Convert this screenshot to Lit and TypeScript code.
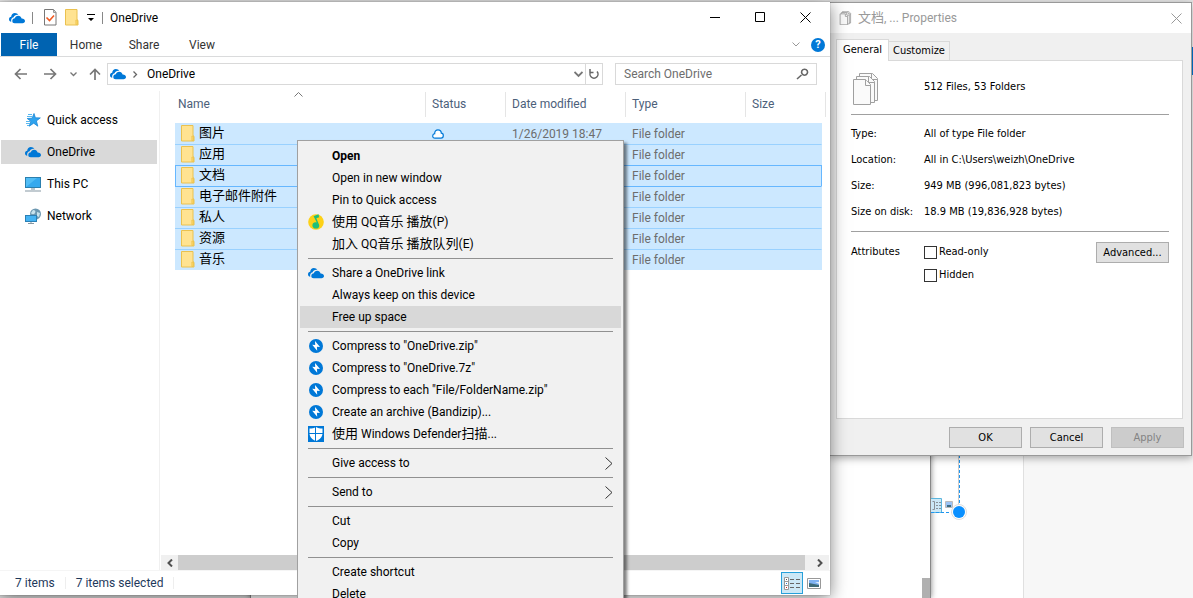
import { LitElement, html, css, svg, nothing, TemplateResult } from "lit";
import { customElement } from "lit/decorators.js";
import { classMap } from "lit/directives/class-map.js";

const base = css`
  * { box-sizing: border-box; }
  button { font: inherit; color: inherit; background: none; border: 0; padding: 0; margin: 0; }
  svg { display: block; flex: none; }
  .cjk { font-size: 13px; line-height: 14px; }
`;

/* Chinese runs are set one pixel larger than the Latin text beside them. */
const mixed = (text: string) =>
  text.split(/([\u4e00-\u9fff]+)/).filter(Boolean)
    .map((part) => /[\u4e00-\u9fff]/.test(part) ? html`<span class="cjk">${part}</span>` : part);

const cloud = html`<svg width="16" height="12" viewBox="0 0 16 12" fill="#0078d7" aria-hidden="true">
  <path d="M2.300 9.700C.8 9.500 0 8.500 0 7.200 0 5.900 .9 4.900 2.200 4.700 2.300 2.400 3.900 1 5.900 1c1.500 0 2.700.7 3.400 1.900C7.100 2.400 5.200 3.500 4.600 5.200 2.800 5.500 1.700 7.400 2.300 9.700z"/>
  <path d="M5.700 11.200C4.100 11.200 3.300 10.200 3.300 8.900 3.300 7.400 4.400 6.300 5.900 6.300 6.200 4.800 7.500 3.700 9.200 3.700c1.700 0 3 1.100 3.400 2.800C14.400 6.400 16 7.300 16 9c0 1.400-1.100 2.200-2.400 2.200z"/>
</svg>`;

const folder = html`<svg width="14" height="17" viewBox="0 0 14 17" aria-hidden="true">
  <path d="M.5.5h11.500v10l1 .8v4.700H.5z" fill="#ffe391" stroke="#eac14f"/>
  <path d="M10.900 15.500v-4.500h1.600v4.500z" fill="#ffd967" stroke="#eac14f" stroke-width=".8"/>
</svg>`;

const star = html`<svg width="16" height="16" viewBox="0 0 16 16" aria-hidden="true">
  <path d="M9 1.500l1.400 4.300 4.900.1-3.900 3 1.400 5.300-4.100-3-4.400 3 1.500-5-3.600-2.700 4.900-.3z" fill="#2ea3ee" stroke="#1b86d6" stroke-width=".8"/>
  <path d="M3 2.500h4M2 4.500h5M1 9.500h4M1 11.500h4M2 13.500h2" stroke="#58b7ef" stroke-width="1"/>
</svg>`;

const pc = html`<svg width="16" height="16" viewBox="0 0 16 16" aria-hidden="true">
  <rect x=".5" y="1.500" width="15" height="10" fill="#52bdf5" stroke="#2b7fae"/>
  <path d="M1 11L12 2h3v9z" fill="#36a9ee"/>
  <path d="M6 12h4v2H6z" fill="#b9c6ce"/><path d="M0 15h16" stroke="#8597a3"/>
</svg>`;

const network = html`<svg width="16" height="16" viewBox="0 0 16 16" aria-hidden="true">
  <circle cx="10.500" cy="6" r="5.500" fill="#6d98b1"/>
  <path d="M8 2c2 0 3 1 2 3S6 6 6 5zM12 4l3 1-1 4-2-1z" fill="#c8e3ee"/>
  <rect x=".5" y="7.500" width="11" height="6" fill="#45b3f3" stroke="#2b80b5"/>
  <path d="M3 15.500h6M6 14v1" stroke="#8597a3"/>
</svg>`;

const bandizip = html`<svg width="16" height="16" viewBox="0 0 16 16" aria-hidden="true">
  <circle cx="8" cy="8" r="7" fill="#0078d7"/>
  <path d="M7 3l.2 4-3-.2 5 6-.3-4 3.100.3z" fill="#fff"/>
</svg>`;

const defender = html`<svg width="16" height="16" viewBox="0 0 16 16" aria-hidden="true">
  <path d="M0 0h16v16H0z" fill="#0078d7"/>
  <path d="M8 1c2 1.200 3.800 1.500 6.500 1.500V7c0 4.200-2.800 6.600-6.500 8C4.300 13.600 1.500 11.200 1.500 7V2.500C4.200 2.500 6 2.200 8 1z" fill="#fff"/>
  <path d="M7.500 1v14M1 7.500h14" stroke="#0078d7" stroke-width="1"/>
</svg>`;

const qq = html`<svg width="16" height="16" viewBox="0 0 16 16" aria-hidden="true">
  <circle cx="8" cy="8" r="7.800" fill="#fdd116"/>
  <path d="M10.500.2L5.600 2.300l3.200 6.200c-2.300-.6-4.400.6-4.400 2.900 0 2 1.600 3.200 3.500 3.200 2.300 0 3.700-1.600 3.300-3.700L8.300 4.200l2.900-.9z" fill="#1fbf7a"/>
</svg>`;

const viewDetails = html`<svg width="16" height="13" viewBox="0 0 16 13" aria-hidden="true">
  <path d="M.5.500h4v12h-4zM.5 4.500h4M.5 8.500h4" fill="#fff" stroke="#999"/>
  <path d="M2 2h1v1H2z" fill="#555"/><path d="M2 6h1v1H2z" fill="#2a7bd0"/><path d="M2 10h1v1H2z" fill="#c22"/>
  <path d="M6 2.500h4M12 2.500h4M6 6.500h4M12 6.500h4M6 10.500h4M12 10.500h4" stroke="#666"/>
</svg>`;

const viewThumbs = html`<svg width="14" height="11" viewBox="0 0 14 11" aria-hidden="true">
  <path d="M.5.500h13v10H.5z" fill="#fff" stroke="#999"/>
  <path d="M2 2h10v7H2z" fill="#7fb2f2"/><path d="M2 5l5 1 5 1v2H2z" fill="#3e6b78"/><path d="M8 4h4v2z" fill="#dcebfb"/>
</svg>`;

const stroked = (w: number, h: number, d: string, color: string, width: number) => html`
  <svg width=${w} height=${h} viewBox="0 0 ${w} ${h}" fill="none" stroke=${color} stroke-width=${width} aria-hidden="true">
    ${svg`<path d=${d}></path>`}
  </svg>`;

const statusCloud = html`<svg width="12" height="10" viewBox="0 0 12 10" fill="#fff" stroke="#0078d7" stroke-width="1.200" aria-hidden="true">
  <path d="M3 9.200C1.500 9.200.7 8.200.7 7 .7 5.700 1.600 4.900 2.700 4.700 2.500 2.500 4 .8 6 .8 8 .8 9.400 2.300 9.300 4.200 10.500 4.300 11.300 5.300 11.300 6.600 11.300 8.200 10.300 9.200 9 9.200z"/>
</svg>`;

const ROWS: { name: string; date?: string; status?: boolean; focus?: boolean }[] = [
  { name: "图片", date: "1/26/2019 18:47", status: true },
  { name: "应用" },
  { name: "文档", focus: true },
  { name: "电子邮件附件" },
  { name: "私人" },
  { name: "资源" },
  { name: "音乐" },
];

@customElement("explorer-window")
class ExplorerWindow extends LitElement {
  static styles = [base, css`
    :host {
      display: flex; flex-direction: column; background: #fff; color: #000;
      font: 12px/16px Roboto, "Noto Sans CJK SC", sans-serif;
      box-shadow: 0 0 1px rgba(0,0,0,.4), 0 3px 16px rgba(0,0,0,.5);
    }
    .title { display: flex; align-items: center; height: 31px; padding: 0 2px 0 9px; }
    .bar { width: 1px; height: 12px; background: #888; }
    .quick { display: flex; align-items: center; gap: 7px; flex: 1; }
    .tools { display: flex; align-items: center; gap: 8px; margin-left: 4px; }
    .caption { display: flex; }
    .caption button { width: 45px; height: 31px; display: grid; place-items: center; }
    .ribbon { display: flex; align-items: center; height: 24px; padding: 0 5px 0 1px; border-bottom: 1px solid #dadbdc; }
    .tab { width: 58px; height: 23px; padding-top: 1px; text-align: center; color: #333; }
    .file { width: 56px; background: #0063b1; color: #fff; }
    .space { flex: 1; }
    .ribbon-end { display: flex; align-items: center; gap: 11px; }
    .help { width: 14px; height: 14px; border-radius: 50%; background: #0078d7; color: #fff; font-weight: 700; line-height: 14px; font-size: 11px; }
    .nav { display: flex; align-items: center; padding: 6px 13px 6px 14px; }
    .nav-buttons { display: flex; align-items: center; gap: 12px; margin-right: 6px; }
    .back { padding-right: 4px; }
    .address { display: flex; align-items: center; flex: 1; height: 22px; border: 1px solid #d9d9d9; padding-left: 2px; gap: 7px; }
    .address .space { padding-left: 2px; }
    .address-end { display: flex; align-items: center; gap: 2px; }
    .address .reload { width: 17px; height: 20px; border-left: 1px solid #d9d9d9; display: grid; place-items: center; }
    .search { display: flex; align-items: center; width: 202px; height: 22px; border: 1px solid #d9d9d9; margin-left: 12px; padding: 0 7px 0 8px; }
    .search input { flex: 1; min-width: 0; border: 0; outline: 0; padding: 0; font: inherit; background: none; }
    .search input::placeholder { color: #6d6d6d; opacity: 1; }
    .main { display: flex; flex: 1; min-height: 0; }
    .side { display: flex; flex-direction: column; gap: 8px; width: 160px; padding: 17px 2px 0 1px; border-right: 1px solid #f0f0f0; }
    .side a { display: flex; align-items: center; gap: 6px; height: 24px; padding-left: 24px; color: #000; text-decoration: none; }
    .side a.current { background: #d9d9d9; }
    .content { flex: 1; min-width: 0; display: flex; flex-direction: column; }
    .list { flex: 1; min-height: 0; padding: 1px 0 0 15px; overflow: hidden; }
    table { border-collapse: separate; border-spacing: 0; table-layout: fixed; width: 647px; }
    .c-name { width: 251px; } .c-status { width: 80px; } .c-date, .c-type { width: 120px; }
    th { padding: 0 0 6px; font-weight: 400; text-align: left; color: #4c607a; position: relative; }
    th span { display: block; height: 25px; line-height: 25px; padding-left: 6px; border-right: 1px solid #e5e5e5; }
    th:first-child span { padding-left: 3px; }
    th:last-child span { margin-right: -4px; }
    .sort { position: absolute; top: 0; left: 119px; }
    td { height: 21px; padding: 0 0 0 6px; background: #cce8ff; color: #6d6d6d; border-top: 1px solid #99d1ff; }
    tbody tr:first-child td { border-top-color: #cce8ff; }
    .focus td, .focus + tr td { border-top-color: #66b7ff; }
    td:last-child { border-right: 1px solid #cce8ff; }
    .focus td:last-child { border-right-color: #66b7ff; }
    .focus td:first-child { box-shadow: inset 1px 0 #66b7ff; }
    .name { display: flex; align-items: center; gap: 4px; height: 20px; padding-bottom: 2px; color: #000; font-size: 13px; line-height: 18px; }
    .scroll { display: flex; height: 15px; margin: 0 1px; background: #f0f0f0; }
    .scroll button { width: 17px; display: grid; place-items: center; }
    .scroll button.next { width: 24px; padding-left: 6px; }
    .thumb { flex: 1; background: #cdcdcd; }
    .status { display: flex; align-items: center; height: 25px; padding: 0 5px 0 15px; color: #1e395b; border-top: 1px solid #f5f5f5; }
    .status .count { padding-right: 10px; margin-right: 10px; border-right: 1px solid #eee; line-height: 12px; }
    .views { display: flex; align-items: center; }
    .views button { width: 22px; height: 22px; display: grid; place-items: center; }
    .views .on { background: #cce8f6; border: 1px solid #26a0da; }
  `];

  render() {
    return html`
      <header class="title">
        <div class="quick">
          ${cloud}<i class="bar"></i>
          <div class="tools">
            <svg width="13" height="17" viewBox="0 0 13 17" aria-hidden="true">
              <path d="M.5.500h9l2.500 3v12.500H.5z" fill="#fff" stroke="#777"/><path d="M9.500.5v3h2.500" fill="none" stroke="#999"/>
              <path d="M2.500 8.500l3 3L10 6.500" fill="none" stroke="#f05a22" stroke-width="1.600"/>
            </svg>
            ${folder}
            <svg width="8" height="8" viewBox="0 0 8 8" aria-hidden="true"><path d="M0 0h8v1H0zM1 4h6L4 7z"/></svg>
          </div>
          <i class="bar"></i><span>OneDrive</span>
        </div>
        <div class="caption">
          <button aria-label="Minimize">${stroked(11, 11, "M0 5.500h10", "#000", 1)}</button>
          <button aria-label="Maximize">${stroked(11, 11, "M.5.500h9v9h-9z", "#000", 1)}</button>
          <button aria-label="Close">${stroked(11, 11, "M.5.500l10 10M10.500.500l-10 10", "#000", 1)}</button>
        </div>
      </header>
      <nav class="ribbon">
        <button class="tab file">File</button><button class="tab">Home</button>
        <button class="tab">Share</button><button class="tab">View</button>
        <span class="space"></span>
        <div class="ribbon-end">
          ${stroked(8, 5, "M.5.500L4 4 7.500.500", "#999", 1)}
          <button class="help" aria-label="Help">?</button>
        </div>
      </nav>
      <div class="nav">
        <div class="nav-buttons">
          <button class="back" aria-label="Back">${stroked(14, 12, "M13 6H2M6.500 1L1.500 6l5 5", "#777", 1.7)}</button>
          <button aria-label="Forward">${stroked(14, 12, "M0 6h11M6.500 1l5 5-5 5", "#777", 1.7)}</button>
          <button aria-label="Recent">${stroked(7, 5, "M.5.500l3 3 3-3", "#777", 1.3)}</button>
          <button aria-label="Up">${stroked(12, 12, "M6 12V2M1 6.500l5-5 5 5", "#777", 1.7)}</button>
        </div>
        <div class="address">
          ${cloud}${stroked(5, 7, "M.5.500l3 3-3 3", "#666", 1.3)}
          <span class="space">OneDrive</span>
          <div class="address-end">
            ${stroked(9, 7, "M.5 1l4 4 4-4", "#777", 1.8)}
            <button class="reload" aria-label="Refresh">${stroked(12, 12, "M3 3.500a4 4 0 1 0 6 0M2 1v3.500h3.500", "#666", 1.5)}</button>
          </div>
        </div>
        <label class="search">
          <input type="search" placeholder="Search OneDrive" aria-label="Search OneDrive" />
          ${stroked(13, 12, "M5.500 7L1 11M8.500 1.200a3 3 0 1 0 .1 0z", "#666", 1.6)}
        </label>
      </div>
      <div class="main">
        <nav class="side">
          <a href="#">${star}Quick access</a>
          <a href="#" class="current">${cloud}OneDrive</a>
          <a href="#">${pc}This PC</a>
          <a href="#">${network}Network</a>
        </nav>
        <section class="content">
          <div class="list">
            <table>
              <colgroup><col class="c-name"><col class="c-status"><col class="c-date"><col class="c-type"><col></colgroup>
              <thead><tr>
                <th><span>Name</span><i class="sort">${stroked(9, 5, "M.5 4.500l4-4 4 4", "#777", 1)}</i></th>
                <th><span>Status</span></th><th><span>Date modified</span></th><th><span>Type</span></th><th><span>Size</span></th>
              </tr></thead>
              <tbody>
                ${ROWS.map((r) => html`<tr class=${classMap({ focus: !!r.focus })}>
                  <td><div class="name">${folder}${r.name}</div></td>
                  <td>${r.status ? statusCloud : nothing}</td>
                  <td>${r.date ?? ""}</td><td>File folder</td><td></td>
                </tr>`)}
              </tbody>
            </table>
          </div>
          <div class="scroll">
            <button aria-label="Scroll left">${stroked(6, 8, "M5 .5L1.500 4 5 7.500", "#505050", 2)}</button>
            <div class="thumb"></div>
            <button class="next" aria-label="Scroll right">${stroked(6, 8, "M1 .5L4.500 4 1 7.500", "#505050", 2)}</button>
          </div>
        </section>
      </div>
      <footer class="status">
        <span class="count">7 items</span><span class="count">7 items selected</span>
        <span class="space"></span>
        <div class="views">
          <button class="on" aria-label="Details">${viewDetails}</button>
          <button aria-label="Thumbnails">${viewThumbs}</button>
        </div>
      </footer>`;
  }
}

interface Entry { text: string; icon?: TemplateResult; bold?: boolean; hot?: boolean; sub?: boolean; }

const MENU: Entry[][] = [
  [
    { text: "Open", bold: true }, { text: "Open in new window" }, { text: "Pin to Quick access" },
    { text: "使用 QQ音乐 播放(P)", icon: qq }, { text: "加入 QQ音乐 播放队列(E)" },
  ],
  [{ text: "Share a OneDrive link", icon: cloud }, { text: "Always keep on this device" }, { text: "Free up space", hot: true }],
  [
    { text: 'Compress to "OneDrive.zip"', icon: bandizip }, { text: 'Compress to "OneDrive.7z"', icon: bandizip },
    { text: 'Compress to each "File/FolderName.zip"', icon: bandizip }, { text: "Create an archive (Bandizip)...", icon: bandizip },
    { text: "使用 Windows Defender扫描...", icon: defender },
  ],
  [{ text: "Give access to", sub: true }],
  [{ text: "Send to", sub: true }],
  [{ text: "Cut" }, { text: "Copy" }],
  [{ text: "Create shortcut" }, { text: "Delete" }],
];

@customElement("context-menu")
class ContextMenu extends LitElement {
  static styles = [base, css`
    :host {
      display: block; box-sizing: border-box; width: 327px; padding: 4px 2px; background: #f1f1f1; color: #000;
      border: 1px solid #a0a0a0; box-shadow: 3px 3px 3px rgba(0,0,0,.5);
      font: 12px/16px Roboto, "Noto Sans CJK SC", sans-serif;
    }
    .item { display: grid; grid-template-columns: 16px 1fr auto; align-items: center; column-gap: 8px; width: 100%; height: 22px; padding: 0 8px; text-align: left; white-space: nowrap; }
    .bold { font-weight: 700; }
    .hot { background: #d8d8d8; }
    .line { height: 1px; margin: 3px 8px; background: #919191; }
  `];

  render() {
    return html`<div role="menu">${MENU.map((group, i) => html`
      ${i ? html`<div class="line" role="separator"></div>` : nothing}
      ${group.map((e) => html`
        <button role="menuitem" class=${classMap({ item: true, bold: !!e.bold, hot: !!e.hot })}>
          <span>${e.icon ?? nothing}</span><span>${mixed(e.text)}</span>
          ${e.sub ? stroked(8, 13, "M.5.500l6.500 6-6.500 6", "#333", 1) : nothing}
        </button>`)}`)}</div>`;
  }
}

const pages = (size: number) => html`<svg width=${size} height=${size} viewBox="0 0 32 32" fill="#fafafa" stroke="#a0a0a0" stroke-width=${size < 20 ? 2 : 1} aria-hidden="true">
  <path d="M8.500.500h13l5 5v22h-18z"/><path d="M20.500.500v6h6"/>
  <path d="M5.500 3.500h13l5 5v21h-18z"/><path d="M17.500 3.500v6h6"/>
  <path d="M2.500 6.500h12l5 5v20h-17z"/><path d="M14.500 6.500v6h5"/>
</svg>`;

@customElement("properties-dialog")
class PropertiesDialog extends LitElement {
  static styles = [base, css`
    :host {
      display: flex; flex-direction: column; box-sizing: border-box; width: 363px; background: #f0f0f0; color: #000;
      border: 1px solid #999; box-shadow: 0 2px 8px rgba(0,0,0,.35);
      font: 11px/16px "DejaVu Sans Condensed", "Noto Sans CJK SC", sans-serif;
    }
    .title { display: flex; align-items: center; gap: 5px; height: 30px; padding: 0 9px; background: #fff; color: #999; font: 12px/16px Roboto, "Noto Sans CJK SC", sans-serif; }
    .title span { flex: none; }
    .title .name { flex: 1; }
    .body { padding: 6px 7px 7px 6px; }
    .tabs { display: flex; align-items: flex-end; }
    .tab { height: 19px; padding: 0 4px; border: 1px solid #d9d9d9; border-bottom: 0; border-left: 0; }
    .tab.on { height: 22px; padding: 0 6px 2px; background: #fff; border-left: 1px solid #d9d9d9; margin-bottom: -1px; }
    .panel { height: 359px; margin-right: 1px; padding: 12px 13px 12px 14px; background: #fff; border: 1px solid #d9d9d9; }
    .summary { display: grid; grid-template-columns: 73px 1fr; height: 42px; border-bottom: 1px solid #a0a0a0; }
    .summary span { line-height: 28px; }
    dl { display: grid; grid-template-columns: 73px 1fr; row-gap: 10px; margin: 0; padding: 11px 0; border-bottom: 1px solid #a0a0a0; }
    dd { margin: 0; }
    .attributes { display: grid; grid-template-columns: 73px 1fr auto; align-items: start; padding-top: 10px; }
    .attributes > span { line-height: 19px; }
    .checks { display: grid; row-gap: 3px; }
    .checks label { display: flex; align-items: center; gap: 2px; height: 20px; }
    .checks input { appearance: none; width: 13px; height: 13px; margin: 0; border: 1px solid #333; background: #fff; }
    .push { width: 73px; height: 21px; background: #e1e1e1; border: 1px solid #adadad; }
    .push:disabled { background: #ccc; border-color: #bfbfbf; color: #838383; }
    .actions { display: flex; justify-content: flex-end; gap: 8px; padding-top: 8px; }
  `];

  render() {
    return html`
      <header class="title">${pages(14)}<span class="name">${mixed("文档, ... Properties")}</span>
        <button aria-label="Close">${stroked(11, 11, "M.5.500l10 10M10.500.500l-10 10", "#999", 1)}</button>
      </header>
      <div class="body">
        <div class="tabs" role="tablist">
          <button class="tab on" role="tab">General</button><button class="tab" role="tab">Customize</button>
        </div>
        <section class="panel">
          <div class="summary">${pages(32)}<span>512 Files, 53 Folders</span></div>
          <dl>
            <dt>Type:</dt><dd>All of type File folder</dd>
            <dt>Location:</dt><dd>All in C:\\Users\\weizh\\OneDrive</dd>
            <dt>Size:</dt><dd>949 MB (996,081,823 bytes)</dd>
            <dt>Size on disk:</dt><dd>18.9 MB (19,836,928 bytes)</dd>
          </dl>
          <div class="attributes">
            <span>Attributes</span>
            <div class="checks">
              <label><input type="checkbox" />Read-only</label>
              <label><input type="checkbox" />Hidden</label>
            </div>
            <button class="push">Advanced...</button>
          </div>
        </section>
        <div class="actions">
          <button class="push">OK</button><button class="push">Cancel</button><button class="push" disabled>Apply</button>
        </div>
      </div>`;
  }
}

@customElement("app-root")
class AppRoot extends LitElement {
  static styles = [base, css`
    :host { display: block; position: relative; height: 100vh; overflow: hidden; background: #f7f7f7; }
    .sheet { position: absolute; top: 0; bottom: 0; left: 0; right: 169px; background: #fff; border-right: 1px solid #e0e0e0; }
    .behind { position: absolute; top: 0; bottom: 0; left: 250px; right: 262px; background: #fff; border: solid #888; border-width: 0 1px; box-shadow: 0 0 6px rgba(0,0,0,.5); }
    .left { position: absolute; top: 0; bottom: 0; left: 0; width: 250px; background: #e0e0e0; }
    .top { position: absolute; top: 0; left: 0; right: 0; height: 3px; background: #e6e6e6; }
    .grip { position: absolute; right: 0; bottom: 0; width: 8px; height: 20px; background: #b0b0b0; }
    .edge { position: absolute; right: 0; top: 47px; width: 2px; height: 28px; background: #0078d7; }
    .marks { position: absolute; right: 224px; top: 440px; }
    .dialog { position: absolute; top: 2px; right: 1px; }
    .explorer { position: absolute; top: 2px; bottom: 3px; left: 0; right: 363px; }
    .menu { position: absolute; top: 140px; left: 297px; }
  `];

  render() {
    return html`
      <div class="sheet"></div>
      <div class="left"></div>
      <div class="behind"><div class="grip"></div></div>
      <div class="top"></div>
      <div class="edge"></div>
      <svg class="marks" width="38" height="82" viewBox="0 0 38 82" aria-hidden="true">
        <path d="M0 58.500h10.500v14H0" fill="#cce8f6" stroke="#5bb5dd"/>
        <path d="M1.500 61.500h2v8h-2M5 62.500h2M8 62.500h2M5 65.500h2M8 65.500h2M5 68.500h2M8 68.500h2" fill="none" stroke="#8a9298"/>
        <path d="M14.500 61.500h7v6h-7z" fill="#9cc3f5" stroke="#bbb"/><path d="M16 65h4v2h-4z" fill="#3c6b80"/>
        <path d="M27.500 0v66" stroke="#ccc"/>
        <path d="M28.500 0v66M0 72.500h22" fill="none" stroke="#1e96f0" stroke-dasharray="3 2"/>
        <circle cx="28" cy="72" r="7.500" fill="#fff" stroke="#ddd"/><circle cx="28" cy="72" r="6" fill="#0a90ff"/>
      </svg>
      <properties-dialog class="dialog"></properties-dialog>
      <explorer-window class="explorer"></explorer-window>
      <context-menu class="menu"></context-menu>`;
  }
}
